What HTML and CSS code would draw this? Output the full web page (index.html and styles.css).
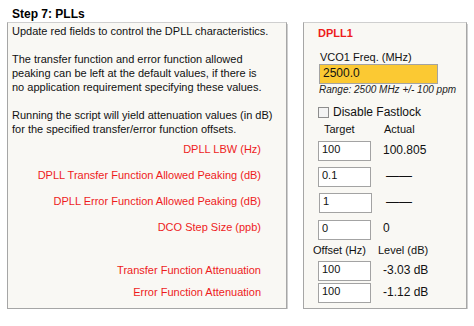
FILE: index.html
```html
<!DOCTYPE html>
<html>
<head>
<meta charset="utf-8">
<link rel="stylesheet" href="styles.css">
</head>
<body>
<div class="page">
  <h1 class="title">Step 7: PLLs</h1>
  <div class="panels">
    <div class="panel left">
      <div class="intro">
        <p>Update red fields to control the DPLL characteristics.</p>
        <p>The transfer function and error function allowed<br>peaking can be left at the default values, if there is<br>no application requirement specifying these values.</p>
        <p>Running the script will yield attenuation values (in dB)<br>for the specified transfer/error function offsets.</p>
      </div>
      <div class="lbl r26">DPLL LBW (Hz)</div>
      <div class="lbl r26">DPLL Transfer Function Allowed Peaking (dB)</div>
      <div class="lbl r26">DPLL Error Function Allowed Peaking (dB)</div>
      <div class="lbl r27">DCO Step Size (ppb)</div>
      <div class="r18"></div>
      <div class="lbl r22">Transfer Function Attenuation</div>
      <div class="lbl r22">Error Function Attenuation</div>
    </div>
    <div class="panel right">
      <div class="dpll">DPLL1</div>
      <div class="vco-label">VCO1 Freq. (MHz)</div>
      <input class="vco-input" type="text" value="2500.0">
      <div class="range">Range: 2500 MHz +/- 100 ppm</div>
      <label class="check-row"><input class="check" type="checkbox"><span>Disable Fastlock</span></label>
      <div class="colhead"><span class="h-target">Target</span><span class="h-actual">Actual</span></div>
      <div class="frow r26"><input class="num" type="text" value="100"><span class="val">100.805</span></div>
      <div class="frow r26"><input class="num" type="text" value="0.1"><span class="val dash">——</span></div>
      <div class="frow r26"><input class="num shift" type="text" value="1"><span class="val dash">——</span></div>
      <div class="frow r27"><input class="num low" type="text" value="0"><span class="val">0</span></div>
      <div class="colhead2 r18"><span class="h-offset">Offset (Hz)</span><span class="h-level">Level (dB)</span></div>
      <div class="frow r22"><input class="num tight" type="text" value="100"><span class="val">-3.03 dB</span></div>
      <div class="frow r22"><input class="num tight" type="text" value="100"><span class="val">-1.12 dB</span></div>
    </div>
  </div>
</div>
</body>
</html>
```
FILE: styles.css
```css
html, body {
  margin: 0;
  padding: 0;
  background: #ffffff;
}
body {
  font-family: "Liberation Sans", Arial, sans-serif;
  color: #111111;
}
.page {
  padding: 7px 0 0 7px;
}
.title {
  margin: 0 0 1px 5px;
  font-size: 12px;
  line-height: 14px;
  font-weight: bold;
  color: #000;
}
.panels {
  display: flex;
  gap: 16px;
  align-items: flex-start;
}
.panel {
  box-sizing: border-box;
  height: 287px;
  background: #f9f8f4;
  border: 1px solid #a6a6a6;
  border-top-color: #cfcfcf;
  box-shadow: 1px 2px 0 #cfcfcf;
}
.left {
  width: 280px;
  padding: 1px 0 0 4px;
}
.intro p {
  margin: 0 0 14px 0;
  font-size: 11px;
  line-height: 14px;
  white-space: nowrap;
}
.intro p:last-child {
  margin-bottom: 0;
}
.lbl {
  padding-right: 25px;
  text-align: right;
  color: #ee1c1c;
  font-size: 11px;
  white-space: nowrap;
}
.r26 { height: 26px; line-height: 26px; }
.r27 { height: 27px; line-height: 27px; }
.r18 { height: 18px; line-height: 18px; }
.r22 { height: 22px; line-height: 22px; }

.right {
  width: 164px;
  padding: 3px 0 0 15px;
}
.dpll {
  margin-left: -1px;
  font-size: 11px;
  line-height: 14px;
  font-weight: bold;
  color: #ee1c1c;
}
.vco-label {
  margin-top: 10px;
  margin-left: 1px;
  font-size: 11px;
  line-height: 14px;
}
.vco-input {
  display: block;
  box-sizing: border-box;
  width: 119px;
  height: 20px;
  margin: 0;
  padding: 0 3px 3px 3px;
  border: 1px solid #a3a3a3;
  background: #fbc933;
  font-family: "Liberation Sans", Arial, sans-serif;
  font-size: 12px;
  color: #111;
  outline: none;
}
.range {
  font-size: 10px;
  line-height: 12px;
  font-style: italic;
  color: #222;
}
.check-row {
  display: flex;
  align-items: center;
  height: 16px;
  margin-top: 8px;
  font-size: 12px;
}
.check {
  appearance: none;
  -webkit-appearance: none;
  box-sizing: border-box;
  width: 11px;
  height: 11px;
  margin: 1px 4px 0 -1px;
  border: 1px solid #8d8d8d;
  background: #f3f3f3;
}
.colhead {
  display: flex;
  margin-top: 2px;
  height: 14px;
  line-height: 14px;
  font-size: 11px;
}
.h-target { margin-left: 5px; width: 60px; }
.frow {
  display: flex;
  align-items: flex-start;
  font-size: 12px;
}
.num {
  box-sizing: border-box;
  width: 53px;
  height: 20px;
  margin: 5px 0 0 -1px;
  padding: 0 3px 5px 3px;
  border: 1px solid #a3a3a3;
  background: #ffffff;
  font-family: "Liberation Sans", Arial, sans-serif;
  font-size: 11px;
  color: #111;
  outline: none;
}
.num.shift { margin-left: 0; margin-right: -1px; }
.num.low { margin-top: 6px; }
.num.tight { margin-top: 2px; }
.val {
  margin-left: 12px;
}
.r26 .val { line-height: 28px; }
.r27 .val { line-height: 28px; }
.val.dash {
  margin-left: 15px;
  font-size: 13px;
}
.colhead2 {
  display: flex;
  font-size: 11px;
  margin-left: -6px;
}
.h-offset { width: 65px; }
```
